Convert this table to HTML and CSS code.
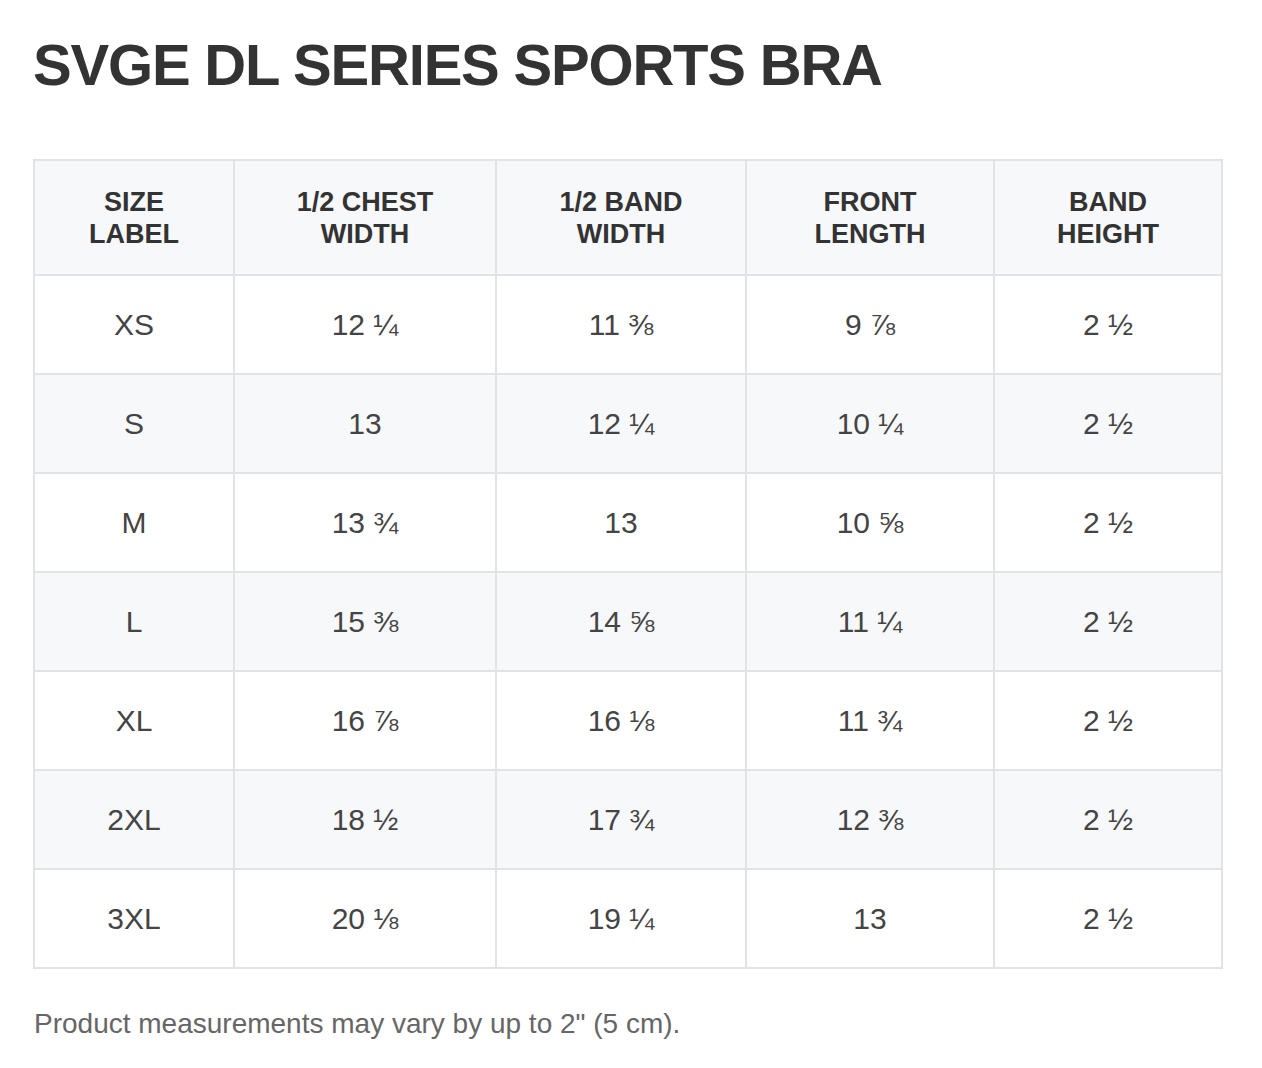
FILE: index.html
```html
<!DOCTYPE html>
<html lang="en">
<head>
<meta charset="utf-8">
<title>SVGE DL Series Sports Bra</title>
<link rel="stylesheet" href="styles.css">
</head>
<body>
<main class="page">
  <h1 class="title">SVGE DL SERIES SPORTS BRA</h1>
  <table class="size-table">
    <colgroup>
      <col class="c1"><col class="c2"><col class="c3"><col class="c4"><col class="c5">
    </colgroup>
    <thead>
      <tr>
        <th>SIZE<br>LABEL</th>
        <th>1/2 CHEST<br>WIDTH</th>
        <th>1/2 BAND<br>WIDTH</th>
        <th>FRONT<br>LENGTH</th>
        <th>BAND<br>HEIGHT</th>
      </tr>
    </thead>
    <tbody>
      <tr><td>XS</td><td>12 ¼</td><td>11 ⅜</td><td>9 ⅞</td><td>2 ½</td></tr>
      <tr><td>S</td><td>13</td><td>12 ¼</td><td>10 ¼</td><td>2 ½</td></tr>
      <tr><td>M</td><td>13 ¾</td><td>13</td><td>10 ⅝</td><td>2 ½</td></tr>
      <tr><td>L</td><td>15 ⅜</td><td>14 ⅝</td><td>11 ¼</td><td>2 ½</td></tr>
      <tr><td>XL</td><td>16 ⅞</td><td>16 ⅛</td><td>11 ¾</td><td>2 ½</td></tr>
      <tr><td>2XL</td><td>18 ½</td><td>17 ¾</td><td>12 ⅜</td><td>2 ½</td></tr>
      <tr><td>3XL</td><td>20 ⅛</td><td>19 ¼</td><td>13</td><td>2 ½</td></tr>
    </tbody>
  </table>
  <p class="note">Product measurements may vary by up to 2" (5 cm).</p>
</main>
</body>
</html>
```
FILE: styles.css
```css
html, body {
  margin: 0;
  padding: 0;
  background: #ffffff;
}
body {
  font-family: "Liberation Sans", Arial, Helvetica, sans-serif;
  color: #333333;
}
.page {
  padding: 33px 41px 0 33px;
}
.title {
  margin: 0;
  font-size: 58px;
  line-height: 64px;
  letter-spacing: -1.2px;
  font-weight: 700;
  color: #333333;
}
.size-table {
  margin-top: 62px;
  width: 1188px;
  border-collapse: collapse;
  table-layout: fixed;
  border: 2px solid #e1e3e7;
}
.c1 { width: 200px; }
.c2 { width: 262px; }
.c3 { width: 250px; }
.c4 { width: 248px; }
.c5 { width: 228px; }
.size-table th,
.size-table td {
  border: 2px solid #e1e3e7;
  text-align: center;
  vertical-align: middle;
  padding: 0;
}
.size-table th {
  height: 113px;
  background: #f7f8fa;
  font-size: 27px;
  line-height: 32px;
  font-weight: 700;
  color: #333333;
}
.size-table td {
  height: 97px;
  font-size: 30px;
  color: #444444;
}
.size-table tbody tr:nth-child(even) td {
  background: #f7f8fa;
}
.note {
  margin: 39px 0 0 1px;
  font-size: 28px;
  line-height: 32px;
  color: #666666;
}
```
